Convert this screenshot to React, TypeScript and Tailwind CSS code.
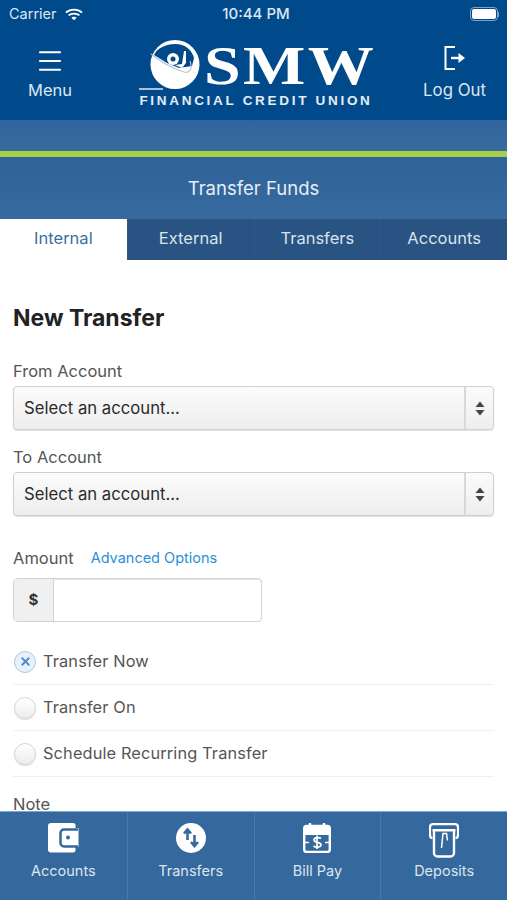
import React from 'react';
import { Menu, X } from 'lucide-react';

const tabs = ['Internal', 'External', 'Transfers', 'Accounts'];

const WalletIcon = () => (
  <svg viewBox="0 0 31 30" className="h-[30px] w-[31px]" fill="none">
    <path d="M3 0h22a2.500 2.500 0 0 1 2.500 2.500V5H30.500V24H27.500v3a2.500 2.500 0 0 1-2.500 2.500H3a3 3 0 0 1-3-3V3a3 3 0 0 1 3-3Z" fill="#fff" />
    <path d="M30 6.500H16a3.500 3.500 0 0 0-3.500 3.500v10a3.500 3.500 0 0 0 3.500 3.500h14" stroke="#35689c" strokeWidth="2.500" />
    <circle cx="20" cy="14.500" r="2" fill="#35689c" />
  </svg>
);

const TransferIcon = () => (
  <svg viewBox="0 0 30 30" className="h-[30px] w-[30px]" fill="none">
    <circle cx="15" cy="15" r="15" fill="#fff" />
    <path d="M11.500 17V7M8 10.500l3.500-4 3.500 4" stroke="#35689c" strokeWidth="2.600" />
    <path d="M18.500 12v10.500M15 19l3.500 4 3.500-4" stroke="#35689c" strokeWidth="2.600" />
  </svg>
);

const BillIcon = () => (
  <svg viewBox="0 0 28 30" className="h-[30px] w-[28px]" fill="none">
    <rect x="1.200" y="3" width="25.600" height="26" rx="2.500" stroke="#fff" strokeWidth="2.400" />
    <path d="M1 4h26v8H1Z" fill="#fff" />
    <path d="M7 1v4M21 1v4" stroke="#fff" strokeWidth="2.600" strokeLinecap="round" />
    <path d="M18 15.500c-1.500-1.300-7-1.500-7 1.500 0 3.200 7 1.600 7 4.800 0 2.900-5.700 2.700-7.500 1.200M14 12.500v13.500" stroke="#fff" strokeWidth="1.700" />
    <path d="M2 19.500h4M22 19.500h4" stroke="#fff" strokeWidth="1.500" />
  </svg>
);

const DepositIcon = () => (
  <svg viewBox="0 0 30 35" className="h-[35px] w-[30px]" fill="none">
    <path d="M4 1.200h22a3 3 0 0 1 3 3V12c0 2-1 3-2.500 3M4 1.200a3 3 0 0 0-3 3V12c0 2 1 3 2.500 3" stroke="#fff" strokeWidth="2.200" />
    <path d="M3.500 6h23v2.500h-23Z" fill="#fff" />
    <path d="M5 8v22a3.500 3.500 0 0 0 3.500 3.500h13A3.500 3.500 0 0 0 25 30V8" stroke="#fff" strokeWidth="2.400" />
    <path d="M12.500 25 14 10.500h3.500l1 7" stroke="#fff" strokeWidth="1.500" />
  </svg>
);

const LogOutIcon = () => (
  <svg viewBox="0 0 24 24" className="h-[24px] w-[24px]" fill="none">
    <path d="M12 1H2.500v22H12" stroke="#fff" strokeWidth="2" />
    <path d="M8 12h10" stroke="#fff" strokeWidth="2.400" />
    <path d="m15.500 7 6.500 5-6.500 5Z" fill="#fff" />
  </svg>
);

const bottomItems = [
  { label: 'Accounts', icon: WalletIcon },
  { label: 'Transfers', icon: TransferIcon },
  { label: 'Bill Pay', icon: BillIcon },
  { label: 'Deposits', icon: DepositIcon },
];

const AccountSelect = () => (
  <div className="flex h-11 items-stretch rounded border border-[#cfcfcf] bg-gradient-to-b from-[#fbfbfb] to-[#eeeeee] shadow-[0_1px_1px_rgba(0,0,0,0.12)]">
    <div className="flex flex-1 items-center pt-[2px] pl-[10px] text-[16.700px] text-[#2b2b2b]">Select an account...</div>
    <div className="flex w-[29px] items-center justify-center border-l-2 border-[#d8d8d8]">
      <svg viewBox="0 0 10 15" className="h-[15px] w-[10px]" fill="#444">
        <path d="M5 0.500 9.500 6h-9Z" />
        <path d="M5 14.500 0.500 9h9Z" />
      </svg>
    </div>
  </div>
);

const RadioRow = ({ label, checked }: { label: string; checked?: boolean }) => (
  <div className="flex h-[46px] items-center gap-[7px] border-b border-[#f0f0f0] pl-[1px]">
    {checked ? (
      <div className="flex h-[22px] w-[22px] items-center justify-center rounded-full border border-[#a9cbe8] bg-[#e9f1f8]">
        <X className="h-[13px] w-[13px] text-[#4a90d0]" strokeWidth={3.500} />
      </div>
    ) : (
      <div className="h-[22px] w-[22px] rounded-full border border-[#d5d5d5] bg-gradient-to-b from-white to-[#ededed] shadow-[0_1px_1px_rgba(0,0,0,0.15)]" />
    )}
    <span className="text-[16.350px] tracking-[0.130px] text-[#555]">{label}</span>
  </div>
);

export default function App() {
  return (
    <div className="flex h-[900px] w-[507px] flex-col overflow-hidden bg-white font-['Inter',sans-serif]">
      {/* Header */}
      <div className="h-[120px] bg-[#004a8b] text-white">
        <div className="flex h-[28px] items-center justify-between pl-[9px] pr-[8px] text-[15px] text-[#dbe6f1]">
          <div className="flex w-[150px] items-center gap-[8px]">
            <span className="text-[14.500px]">Carrier</span>
            <svg viewBox="0 0 20 14" className="h-[13px] w-[18px]" fill="none" stroke="#fff" strokeWidth="2">
              <path d="M1 5c5-4.500 13-4.500 18 0M4 8c3-2.700 9-2.700 12 0" />
              <path d="m7 10.500 3 3 3-3c-1.500-1.300-4.500-1.300-6 0Z" fill="#fff" stroke="none" />
            </svg>
          </div>
          <span className="font-medium">10:44 PM</span>
          <div className="flex w-[146px] items-center justify-end">
            <div className="flex h-[14px] w-[28px] items-center rounded-[4px] border border-[#7fa2c6] p-[1px]">
              <div className="h-full w-full rounded-[2px] bg-white" />
            </div>
            <div className="h-[5px] w-[1px] bg-[#7fa2c6]" />
          </div>
        </div>
        <div className="flex h-[92px] items-start justify-between">
          <div className="flex w-[100px] flex-col items-center pt-[18px]">
            <Menu className="h-[30px] w-[30px] text-white" strokeWidth={1.700} />
            <span className="mt-[2px] text-[16.500px] text-[#dbe6f1]">Menu</span>
          </div>
          <div className="ml-[12px] flex flex-col pt-[11px]">
            <div className="flex h-[52px] items-end">
              <svg viewBox="0 0 64 52" className="h-[52px] w-[64px] shrink-0" fill="none">
                <path d="M0 50h24" stroke="#dce8f3" strokeWidth="1.500" />
                <circle cx="36" cy="25.500" r="24.500" fill="#fff" />
                <path d="M15 16C18 9 27 5 36 5c10 0 17 6 19 14l-2 8-13 2-12-5Z" fill="#004a8b" />
                <circle cx="34" cy="20" r="6" fill="#fff" />
                <circle cx="34" cy="20" r="2.500" fill="#004a8b" />
                <path d="M47 12v12l-4 5-7-3 7-1 2-13Z" fill="#fff" />
                <path d="M12 15c10 8 20 14 33 18 4 1 7-1 7-4 0-3 0-5-1-7" stroke="#b9c4d2" strokeWidth="1.100" />
              </svg>
              <span className="ml-[1px] inline-block origin-left scale-x-[1.200] pt-[1px] font-['Liberation_Serif',serif] text-[55px] leading-[50px] font-bold tracking-[2px] whitespace-nowrap text-white">SMW</span>
            </div>
            <span className="mt-[2px] font-['Liberation_Sans',sans-serif] text-[13.500px] leading-[16px] font-bold tracking-[2.700px] whitespace-nowrap text-[#e4edf5]">FINANCIAL CREDIT UNION</span>
          </div>
          <div className="flex w-[107px] flex-col items-center pt-[18px] pl-[2px]">
            <LogOutIcon />
            <span className="mt-[8px] text-[16.800px] text-[#dbe6f1]">Log Out</span>
          </div>
        </div>
      </div>

      {/* Title band */}
      <div className="h-[31px] bg-gradient-to-b from-[#2f659f] to-[#3a6a9c]" />
      <div className="h-[6px] bg-[#a6cf4a]" />
      <div className="flex h-[62px] items-center justify-center bg-gradient-to-b from-[#2f6399] to-[#376a9e] pt-[1px] text-[18.500px] text-[#e6eef6]">Transfer Funds</div>

      {/* Tabs */}
      <div className="grid h-[41px] grid-cols-4 bg-[#285382]">
        {tabs.map((tab, i) => (
          <div
            key={tab}
            className={`flex items-center justify-center pb-[2px] text-[16.500px] ${
              i === 0 ? 'bg-white text-[#3d6f9f]' : 'border-l border-[#2d5a8a] text-[#d8e3ee]'
            }`}
          >
            {tab}
          </div>
        ))}
      </div>

      {/* Form */}
      <div className="flex-1 overflow-hidden px-[13px] pt-[43px]">
        <h1 className="text-[23px] leading-[30px] font-bold text-[#222]">New Transfer</h1>
        <label className="mt-[26px] block text-[16.500px] leading-[24px] text-[#555]">From Account</label>
        <div className="mt-[3px]"><AccountSelect /></div>
        <label className="mt-[15px] block text-[16.500px] leading-[24px] text-[#555]">To Account</label>
        <div className="mt-[3px]"><AccountSelect /></div>
        <div className="mt-[30px] flex items-center gap-[17px] leading-[24px]">
          <span className="text-[16.500px] text-[#555]">Amount</span>
          <a className="text-[14.500px] text-[#2d8fd5]">Advanced Options</a>
        </div>
        <div className="mt-[8px] flex h-11 w-[249px] rounded border border-[#d2d2d2] bg-white shadow-[inset_0_1px_1px_rgba(0,0,0,0.1)]">
          <div className="flex w-[40px] items-center justify-center border-r border-[#d2d2d2] bg-[#f0f0f0] text-[15px] font-bold text-[#333]">$</div>
        </div>
        <div className="mt-[17px]">
          <RadioRow label="Transfer Now" checked />
          <RadioRow label="Transfer On" />
          <RadioRow label="Schedule Recurring Transfer" />
        </div>
        <label className="mt-[15px] block text-[16.500px] leading-[24px] text-[#555]">Note</label>
      </div>

      {/* Bottom nav */}
      <div className="grid h-[89px] grid-cols-4 border-t border-[#7fa6cc] bg-[#35689c]">
        {bottomItems.map((item, i) => {
          const Icon = item.icon;
          return (
            <div key={item.label} className={`flex flex-col items-center ${i > 0 ? 'border-l border-[#4a79a8]' : ''}`}>
              <div className="flex h-[46px] items-start pt-[11px]"><Icon /></div>
              <span className="mt-[2px] text-[14.500px] text-[#dbe6f1]">{item.label}</span>
            </div>
          );
        })}
      </div>
    </div>
  );
}
